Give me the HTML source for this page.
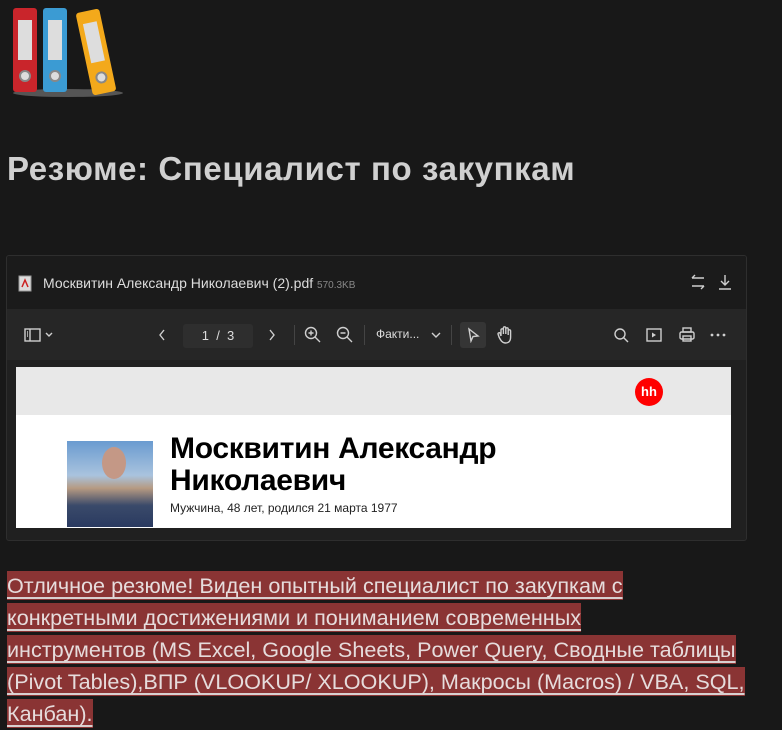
<!DOCTYPE html>
<html><head><meta charset="utf-8"><style>
*{margin:0;padding:0;box-sizing:border-box}
body{width:782px;height:727px;overflow:hidden;background:#181818;font-family:"Liberation Sans","Noto Sans CJK SC",sans-serif;position:relative}
.abs{position:absolute}
h1{position:absolute;left:7px;top:150px;font-size:33px;font-weight:bold;color:#d0d0d0;letter-spacing:0.6px;white-space:nowrap}
.viewer{left:6px;top:255px;width:741px;height:286px;border:1px solid #2e2e2e;background:#202020;border-radius:3px;overflow:hidden}
.hdr{left:0;top:0;width:739px;height:53px;background:#1b1b1b}
.tb{left:0;top:53px;width:739px;height:51px;background:#262626}
.page{left:9px;top:111px;width:715px;height:161px;background:#fff}
.txt{position:absolute;left:7px;top:570px;width:775px;white-space:nowrap;font-family:"Liberation Sans Narrow","Liberation Sans",sans-serif;font-size:21.6px;line-height:32px;color:#e6dcdc}
.txt span{background:#8a3434;text-decoration:underline;text-decoration-color:#d8d0d0;text-underline-offset:4px;box-decoration-break:clone;-webkit-box-decoration-break:clone;padding:2px 0}
.ic{stroke:#cfcfcf;fill:none;stroke-width:1.4}
</style></head><body>
<svg class="abs" style="left:8px;top:4px" width="115" height="95" viewBox="0 0 115 95">
<ellipse cx="60" cy="89" rx="55" ry="4" fill="#555"/>
<rect x="5" y="4" width="24" height="84" rx="3" fill="#c9252b"/>
<rect x="10" y="16" width="14" height="40" fill="#ddd"/>
<circle cx="17" cy="72" r="5" fill="#ddd" stroke="#888" stroke-width="2"/>
<rect x="35" y="4" width="24" height="84" rx="3" fill="#3b9bd3"/>
<rect x="40" y="16" width="14" height="40" fill="#ddd"/>
<circle cx="47" cy="72" r="5" fill="#ddd" stroke="#888" stroke-width="2"/>
<g transform="rotate(-12 88 48)"><rect x="76" y="6" width="24" height="84" rx="3" fill="#f3a91b"/>
<rect x="81" y="18" width="14" height="40" fill="#ddd"/>
<circle cx="88" cy="74" r="5" fill="#ddd" stroke="#888" stroke-width="2"/></g>
</svg>
<h1>Резюме: Специалист по закупкам</h1>
<div class="abs viewer">
 <div class="abs hdr">
  <svg class="abs" style="left:11px;top:19px" width="14" height="17"><rect x="1" y="1" width="12" height="15" fill="#ddd" stroke="#999"/><path d="M4 12 L7 5 L10 12" stroke="#c22" fill="none" stroke-width="1.5"/></svg>
  <div class="abs" style="left:36px;top:19px;font-size:14px;color:#ddd;white-space:nowrap">Москвитин Александр Николаевич (2).pdf <span style="font-size:10px;color:#888">570.3KB</span></div>
  <svg class="abs" style="left:682px;top:17px" width="18" height="18"><path class="ic" d="M3 5H15M3 5L6 2M15 13H3M15 13L12 16"/></svg>
  <svg class="abs" style="left:710px;top:17px" width="16" height="18"><path class="ic" d="M8 2V12M4 8L8 12L12 8M2 16H14"/></svg>
 </div>
 <div class="abs tb">
  <svg class="abs" style="left:17px;top:19px" width="32" height="14"><rect class="ic" x="1" y="1" width="15" height="12"/><path class="ic" d="M6 1V13M3 4H4M3 6H4M3 8H4M22 5L25 8L28 5"/></svg>
  <svg class="abs" style="left:150px;top:19px" width="10" height="14"><path class="ic" d="M7 2L3 7L7 12"/></svg>
  <div class="abs" style="left:176px;top:15px;width:70px;height:24px;background:#2e2e2e;border-radius:3px;color:#ddd;font-size:13px;line-height:24px;text-align:center">1 &nbsp;/ &nbsp;3</div>
  <svg class="abs" style="left:260px;top:19px" width="10" height="14"><path class="ic" d="M3 2L7 7L3 12"/></svg>
  <div class="abs" style="left:287px;top:16px;width:1px;height:20px;background:#444"></div>
  <svg class="abs" style="left:297px;top:17px" width="18" height="18"><circle class="ic" cx="7" cy="7" r="5.5"/><path class="ic" d="M11 11L16 16M4.5 7H9.5M7 4.5V9.5"/></svg>
  <svg class="abs" style="left:329px;top:17px" width="18" height="18"><circle class="ic" cx="7" cy="7" r="5.5"/><path class="ic" d="M11 11L16 16M4.5 7H9.5"/></svg>
  <div class="abs" style="left:357px;top:16px;width:1px;height:20px;background:#444"></div>
  <div class="abs" style="left:369px;top:18px;font-size:12px;color:#ddd">Факти...</div>
  <svg class="abs" style="left:424px;top:22px" width="10" height="8"><path class="ic" d="M1 2L5 6L9 2"/></svg>
  <div class="abs" style="left:444px;top:16px;width:1px;height:20px;background:#444"></div>
  <div class="abs" style="left:453px;top:13px;width:26px;height:26px;background:#353535;border-radius:3px"></div>
  <svg class="abs" style="left:459px;top:18px" width="14" height="16"><path class="ic" d="M3 2L12 9L7 9.5L5 14Z"/></svg>
  <svg class="abs" style="left:489px;top:16px" width="18" height="20"><path class="ic" d="M5 11V5a1.2 1.2 0 012.4 0V9M7.4 9V3a1.2 1.2 0 012.4 0V9M9.8 9V4a1.2 1.2 0 012.4 0V10M12.2 10V6a1.2 1.2 0 012.4 0V12c0 4-2 6-5 6S5 16 3 12l-1-3a1.2 1.2 0 012-1L5 11"/></svg>
  <svg class="abs" style="left:606px;top:18px" width="18" height="18"><circle class="ic" cx="7" cy="7" r="5" stroke-width="1.8"/><path class="ic" d="M10.5 10.5L15 15" stroke-width="1.8"/></svg>
  <svg class="abs" style="left:639px;top:19px" width="16" height="14"><rect class="ic" x="1" y="1" width="14" height="12"/><path d="M6 4.5L10 7L6 9.5Z" fill="#cfcfcf"/></svg>
  <svg class="abs" style="left:671px;top:17px" width="18" height="18"><rect class="ic" x="5" y="2" width="8" height="4"/><rect class="ic" x="2" y="6" width="14" height="7" rx="1.5"/><rect class="ic" x="5" y="10" width="8" height="5"/></svg>
  <svg class="abs" style="left:703px;top:23px" width="16" height="6"><circle cx="2" cy="3" r="1.4" fill="#cfcfcf"/><circle cx="8" cy="3" r="1.4" fill="#cfcfcf"/><circle cx="14" cy="3" r="1.4" fill="#cfcfcf"/></svg>
 </div>
 <div class="abs page">
  <div class="abs" style="left:0;top:0;width:715px;height:48px;background:#e8e8e8"></div>
  <div class="abs" style="left:619px;top:11px;width:28px;height:28px;border-radius:50%;background:#f00;color:#fff;font-weight:bold;font-size:13px;line-height:28px;text-align:center">hh</div>
  <div class="abs" style="left:51px;top:74px;width:86px;height:86px;background:linear-gradient(#6a9bd0 0%,#a9c3de 40%,#b69a82 55%,#3a4a6a 75%,#2a3a60 100%)"></div>
  <div class="abs" style="left:86px;top:80px;width:24px;height:32px;border-radius:50%;background:#c49886"></div>
  <div class="abs" style="left:154px;top:66px;font-size:30px;font-weight:bold;color:#000;line-height:32px;letter-spacing:-0.3px">Москвитин Александр<br>Николаевич</div>
  <div class="abs" style="left:154px;top:134px;font-family:'Liberation Sans Narrow','Liberation Sans',sans-serif;font-size:12px;color:#222">Мужчина, 48 лет, родился 21 марта 1977</div>
 </div>
</div>
<div class="txt"><span>Отличное резюме! Виден опытный специалист по закупкам с </span><br><span>конкретными достижениями и пониманием современных </span><br><span>инструментов (MS Excel, Google Sheets, Power Query, Сводные таблицы </span><br><span>(Pivot Tables),ВПР (VLOOKUP/ XLOOKUP), Макросы (Macros) / VBA, SQL, </span><br><span>Канбан).</span></div>
</body></html>
